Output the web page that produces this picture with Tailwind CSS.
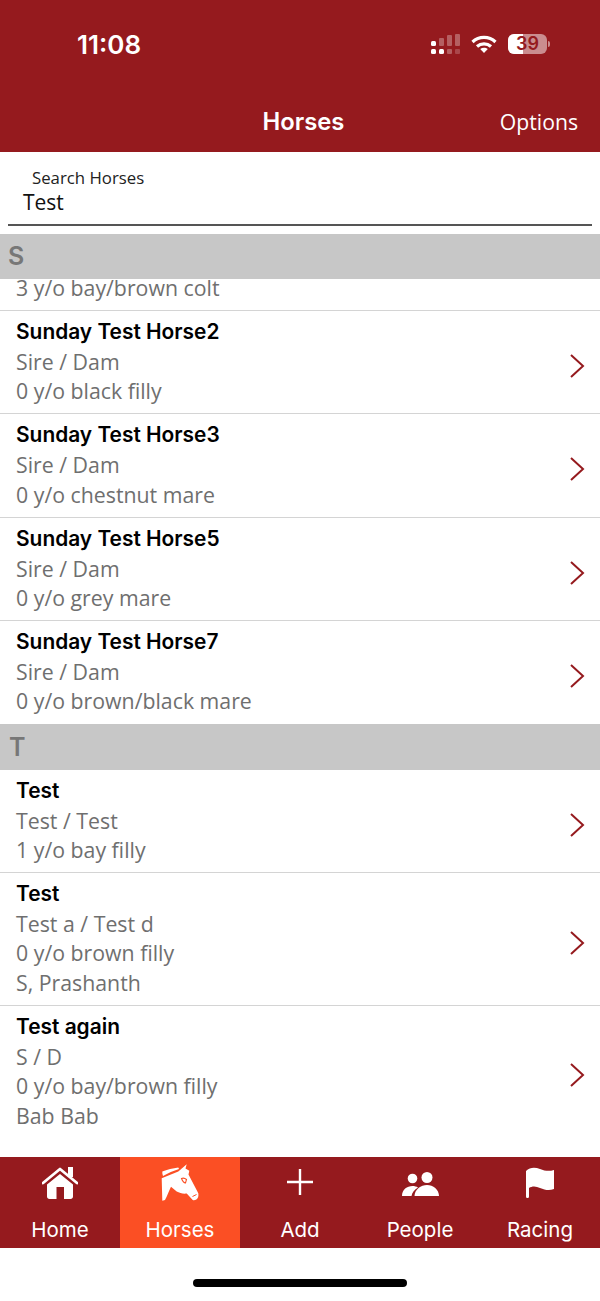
<!DOCTYPE html>
<html lang="en">
<head>
    <meta charset="UTF-8">
    <meta name="viewport" content="width=device-width, initial-scale=1.0">
    <title>Horses</title>
    <script src="https://cdn.jsdelivr.net/npm/@tailwindcss/browser@4"></script>
</head>
<body class="bg-white font-['Open_Sans',sans-serif]">
    <div class="w-[600px] h-[1301px] flex flex-col overflow-hidden">
        <!-- Status bar and title -->
        <header class="h-[151.500px] shrink-0 bg-[#951a1e] text-white flex flex-col">
            <div class="h-[92px] flex items-start justify-between">
                <div class="w-[218px] pt-[28px] text-center font-['Inter',sans-serif] font-semibold text-[26px] leading-[34px]">11:08</div>
                <div class="flex items-center pt-[34px] pr-[50px]">
                    <svg class="w-[30px] h-[20px]" viewBox="0 0 30 20">
                        <g fill="#fff">
                            <rect x="0" y="7" width="5" height="5" rx="1.500"/>
                            <rect x="0" y="15" width="5" height="5" rx="1.500"/>
                            <rect x="8" y="15" width="5" height="5" rx="1.500"/>
                        </g>
                        <g fill="#fff" fill-opacity=".3">
                            <rect x="8" y="4" width="5" height="8" rx="1"/>
                            <rect x="16" y="1" width="5" height="11" rx="1"/>
                            <rect x="24" y="0" width="5" height="12" rx="1"/>
                            <rect x="16" y="15" width="5" height="5" rx="1"/>
                            <rect x="24" y="15" width="5" height="5" rx="1" fill-opacity=".2"/>
                        </g>
                    </svg>
                    <svg class="w-[26px] h-[18px] ml-[10px]" viewBox="0 0 26 18" fill="none" stroke="#fff" stroke-width="3.200">
                        <path d="M1.500 7C8 .8 18 .8 24.500 7"/>
                        <path d="M6 11.500C10 7.900 16 7.900 20 11.500"/>
                        <path d="M13 18L9.200 14C11.400 12.200 14.600 12.200 16.800 14Z" fill="#fff" stroke="none"/>
                    </svg>
                    <div class="relative w-[39px] h-[20px] ml-[11px] rounded-[6px] bg-white/50 overflow-hidden">
                        <div class="absolute left-0 top-0 h-full w-[15px] bg-white"></div>
                        <div class="absolute inset-0 text-center font-['Inter',sans-serif] font-semibold text-[18px] leading-[20px] text-[#951a1e]">39</div>
                    </div>
                    <div class="w-[2px] h-[6px] ml-[1px] rounded-r-sm bg-white/50"></div>
                </div>
            </div>
            <div class="relative h-[59.500px] flex items-start justify-center">
                <div class="pl-[7px] pt-[13px] font-['Inter',sans-serif] font-semibold text-[23.800px] leading-[34px]">Horses</div>
                <div class="absolute right-[22px] top-[14px] text-[21.200px] leading-[32px]">Options</div>
            </div>
        </header>

        <!-- Search -->
        <div class="h-[82.500px] shrink-0 px-[8px] pt-[16px]">
            <div class="h-[58px] border-b-2 border-[#555]">
                <div class="pl-[24px] text-[16.800px] leading-[20px] text-[#222]">Search Horses</div>
                <div class="pl-[15px] text-[21px] leading-[28px] text-[#111]">Test</div>
            </div>
        </div>

        <!-- Horse list -->
        <div class="flex-1 flex flex-col overflow-hidden">
            <div class="h-[44.500px] shrink-0 bg-[#c7c7c7] pl-[8px] font-['Inter',sans-serif] font-semibold text-[25px] leading-[45px] text-[#777]">S</div>
            <div class="h-[32.500px] shrink-0 border-b border-[#d4d4d4] pl-[16px] text-[21.300px] leading-[18px] text-[#6f6f6f]">3 y/o bay/brown colt</div>

            <div class="h-[103.250px] shrink-0 border-b border-[#d4d4d4] pl-[16px] pr-[15px] pt-[6px] flex justify-between">
                <div>
                    <div class="font-['Inter',sans-serif] font-semibold text-[20.900px] leading-[30px] text-black">Sunday Test Horse2</div>
                    <div class="text-[21.300px] leading-[29.250px] text-[#6f6f6f]">Sire / Dam</div>
                    <div class="text-[21.300px] leading-[29.250px] text-[#6f6f6f]">0 y/o black filly</div>
                </div>
                <svg class="w-[16px] h-[26px] mt-[36px]" viewBox="0 0 16 26" fill="none" stroke="#951a1e" stroke-width="2"><path d="M2 2L14 13L2 24"/></svg>
            </div>
            <div class="h-[103.250px] shrink-0 border-b border-[#d4d4d4] pl-[16px] pr-[15px] pt-[6px] flex justify-between">
                <div>
                    <div class="font-['Inter',sans-serif] font-semibold text-[20.900px] leading-[30px] text-black">Sunday Test Horse3</div>
                    <div class="text-[21.300px] leading-[29.250px] text-[#6f6f6f]">Sire / Dam</div>
                    <div class="text-[21.300px] leading-[29.250px] text-[#6f6f6f]">0 y/o chestnut mare</div>
                </div>
                <svg class="w-[16px] h-[26px] mt-[36px]" viewBox="0 0 16 26" fill="none" stroke="#951a1e" stroke-width="2"><path d="M2 2L14 13L2 24"/></svg>
            </div>
            <div class="h-[103.250px] shrink-0 border-b border-[#d4d4d4] pl-[16px] pr-[15px] pt-[6px] flex justify-between">
                <div>
                    <div class="font-['Inter',sans-serif] font-semibold text-[20.900px] leading-[30px] text-black">Sunday Test Horse5</div>
                    <div class="text-[21.300px] leading-[29.250px] text-[#6f6f6f]">Sire / Dam</div>
                    <div class="text-[21.300px] leading-[29.250px] text-[#6f6f6f]">0 y/o grey mare</div>
                </div>
                <svg class="w-[16px] h-[26px] mt-[36px]" viewBox="0 0 16 26" fill="none" stroke="#951a1e" stroke-width="2"><path d="M2 2L14 13L2 24"/></svg>
            </div>
            <div class="h-[103.250px] shrink-0 pl-[16px] pr-[15px] pt-[6px] flex justify-between">
                <div>
                    <div class="font-['Inter',sans-serif] font-semibold text-[20.900px] leading-[30px] text-black">Sunday Test Horse7</div>
                    <div class="text-[21.300px] leading-[29.250px] text-[#6f6f6f]">Sire / Dam</div>
                    <div class="text-[21.300px] leading-[29.250px] text-[#6f6f6f]">0 y/o brown/black mare</div>
                </div>
                <svg class="w-[16px] h-[26px] mt-[36px]" viewBox="0 0 16 26" fill="none" stroke="#951a1e" stroke-width="2"><path d="M2 2L14 13L2 24"/></svg>
            </div>

            <div class="h-[45.500px] shrink-0 bg-[#c7c7c7] pl-[9px] font-['Inter',sans-serif] font-semibold text-[25px] leading-[46px] text-[#777]">T</div>

            <div class="h-[103.500px] shrink-0 border-b border-[#d4d4d4] pl-[16px] pr-[15px] pt-[6px] flex justify-between">
                <div>
                    <div class="font-['Inter',sans-serif] font-semibold text-[20.900px] leading-[30px] text-black">Test</div>
                    <div class="text-[21.300px] leading-[29.250px] text-[#6f6f6f]">Test / Test</div>
                    <div class="text-[21.300px] leading-[29.250px] text-[#6f6f6f]">1 y/o bay filly</div>
                </div>
                <svg class="w-[16px] h-[26px] mt-[36px]" viewBox="0 0 16 26" fill="none" stroke="#951a1e" stroke-width="2"><path d="M2 2L14 13L2 24"/></svg>
            </div>
            <div class="h-[133px] shrink-0 border-b border-[#d4d4d4] pl-[16px] pr-[15px] pt-[6px] flex justify-between">
                <div>
                    <div class="font-['Inter',sans-serif] font-semibold text-[20.900px] leading-[30px] text-black">Test</div>
                    <div class="text-[21.300px] leading-[29.250px] text-[#6f6f6f]">Test a / Test d</div>
                    <div class="text-[21.300px] leading-[29.250px] text-[#6f6f6f]">0 y/o brown filly</div>
                    <div class="text-[21.300px] leading-[29.250px] text-[#6f6f6f]">S, Prashanth</div>
                </div>
                <svg class="w-[16px] h-[26px] mt-[51px]" viewBox="0 0 16 26" fill="none" stroke="#951a1e" stroke-width="2"><path d="M2 2L14 13L2 24"/></svg>
            </div>
            <div class="h-[133px] shrink-0 pl-[16px] pr-[15px] pt-[6px] flex justify-between">
                <div>
                    <div class="font-['Inter',sans-serif] font-semibold text-[20.900px] leading-[30px] text-black">Test again</div>
                    <div class="text-[21.300px] leading-[29.250px] text-[#6f6f6f]">S / D</div>
                    <div class="text-[21.300px] leading-[29.250px] text-[#6f6f6f]">0 y/o bay/brown filly</div>
                    <div class="text-[21.300px] leading-[29.250px] text-[#6f6f6f]">Bab Bab</div>
                </div>
                <svg class="w-[16px] h-[26px] mt-[50px]" viewBox="0 0 16 26" fill="none" stroke="#951a1e" stroke-width="2"><path d="M2 2L14 13L2 24"/></svg>
            </div>
        </div>

        <!-- Tab bar -->
        <nav class="h-[91px] shrink-0 bg-[#951a1e] text-white grid grid-cols-5 font-['Inter',sans-serif] text-[20.500px] leading-[28px] text-center">
            <div class="relative flex flex-col items-center pt-[10px]">
                <svg class="w-[36px] h-[32px]" viewBox="0 0 36 32">
                    <path d="M1 16L18 2L35 16" fill="none" stroke="#fff" stroke-width="2.800" stroke-linecap="round" stroke-linejoin="round"/>
                    <rect x="26" y="0" width="5" height="10" fill="#fff"/>
                    <path d="M5 17.500L18 7L31 17.500V29.500C31 31 30 32 28.500 32H22V20H14.500V32H7.500C6 32 5 31 5 29.500Z" fill="#fff"/>
                </svg>
                <span class="absolute top-[59px]">Home</span>
            </div>
            <div class="relative flex flex-col items-center pt-[6px] bg-[#fb4f24]">
                <svg class="w-[40px] h-[40px]" viewBox="0 0 40 40" fill="#fff">
                    <path d="M2.300 8.500C7 6.800 13 5.400 18.300 4.600L19 6C13.500 7.800 8 10 3 13C2.400 11.500 2.200 10 2.300 8.500Z"/>
                    <path d="M1.700 15.300L18.300 8.400L26.700 1.300L25.500 5.500L29.300 7.700L28.500 11.500L38.300 30.300C38.800 33 38 35.500 36.700 36.300C35.200 37.300 33.500 37.300 32.700 37L26.700 30.500C23 31 19.500 30 16.700 28.500L11 23.700C9 28 7 33 5 37L2.300 37.700Z"/>
                    <path d="M21.500 15.500C23 14.800 25 15.200 26.500 16.500L25.500 20C24 19.800 22.500 18 21.500 15.500Z" fill="none" stroke="#fb4f24" stroke-width="1.100"/>
                    <path d="M32.500 33.500L36.500 31.500" fill="none" stroke="#fb4f24" stroke-width="1"/>
                </svg>
                <span class="absolute top-[59px]">Horses</span>
            </div>
            <div class="relative flex flex-col items-center pt-[12px]">
                <svg class="w-[26px] h-[26px]" viewBox="0 0 26 26" fill="none" stroke="#fff" stroke-width="2.400"><path d="M13 0V26M0 13H26"/></svg>
                <span class="absolute top-[59px]">Add</span>
            </div>
            <div class="relative flex flex-col items-center pt-[15px]">
                <svg class="w-[37px] h-[24px]" viewBox="0 0 37 24" fill="#fff">
                    <circle cx="10.500" cy="6.500" r="4.800"/>
                    <circle cx="25" cy="5.500" r="5.500"/>
                    <path d="M0 24C0 17.500 5 14 10.500 14C12.500 14 14.500 14.500 16 15.500C12.500 17.500 10 20.500 9.500 24Z"/>
                    <path d="M12.500 24C12.500 17.500 19 13 25 13C31 13 37 17.500 37 24Z"/>
                </svg>
                <span class="absolute top-[59px]">People</span>
            </div>
            <div class="relative flex flex-col items-center pt-[10px]">
                <svg class="w-[28px] h-[31px]" viewBox="0 0 28 31" fill="#fff">
                    <path d="M0 4C4 0 9 0 14 2C19 4 23 4.500 28 3V22C23 24 19 23 14 21C10 19 6 19 3 21V29.500C3 31.500 0 31.500 0 29.500Z"/>
                </svg>
                <span class="absolute top-[59px]">Racing</span>
            </div>
        </nav>

        <!-- Home indicator -->
        <div class="h-[53px] shrink-0 flex justify-center pt-[31px]">
            <div class="w-[214px] h-[8px] rounded-full bg-black"></div>
        </div>
    </div>
</body>
</html>
